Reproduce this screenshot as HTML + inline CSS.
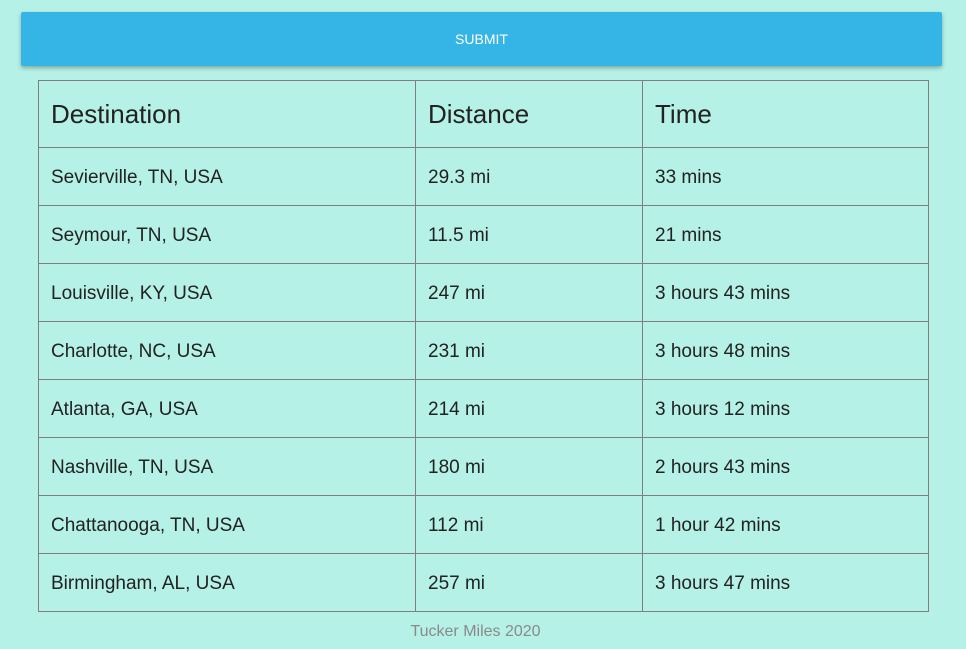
<!DOCTYPE html>
<html><head><style>
html,body{margin:0;padding:0;background:#b5f1e6;width:966px;height:649px;overflow:hidden;font-family:"Liberation Sans",sans-serif;}
.btn{position:absolute;left:21px;top:12px;width:921px;height:54px;background:#35b5e6;border-radius:2px;box-shadow:0 2px 4px rgba(0,0,0,.3);color:#fff;font-size:14px;text-align:center;line-height:54px;}
table{position:absolute;left:38px;top:80px;border-collapse:collapse;width:891px;}
td,th{border:1px solid #7f7f7f;padding:0 0 0 12px;text-align:left;color:#222;}
th{height:66px;font-size:26px;font-weight:normal;}
td{height:54px;padding-top:3px;font-size:19px;}
.f{position:absolute;left:0;width:951px;top:623px;text-align:center;color:#8a8a8a;font-size:16px;}
</style></head><body>
<div class="btn">SUBMIT</div>
<table>
<tr><th style="width:364px">Destination</th><th style="width:214px">Distance</th><th>Time</th></tr>
<tr><td>Sevierville, TN, USA</td><td>29.3 mi</td><td>33 mins</td></tr>
<tr><td>Seymour, TN, USA</td><td>11.5 mi</td><td>21 mins</td></tr>
<tr><td>Louisville, KY, USA</td><td>247 mi</td><td>3 hours 43 mins</td></tr>
<tr><td>Charlotte, NC, USA</td><td>231 mi</td><td>3 hours 48 mins</td></tr>
<tr><td>Atlanta, GA, USA</td><td>214 mi</td><td>3 hours 12 mins</td></tr>
<tr><td>Nashville, TN, USA</td><td>180 mi</td><td>2 hours 43 mins</td></tr>
<tr><td>Chattanooga, TN, USA</td><td>112 mi</td><td>1 hour 42 mins</td></tr>
<tr><td>Birmingham, AL, USA</td><td>257 mi</td><td>3 hours 47 mins</td></tr>
</table>
<div class="f">Tucker Miles 2020</div>
</body></html>
